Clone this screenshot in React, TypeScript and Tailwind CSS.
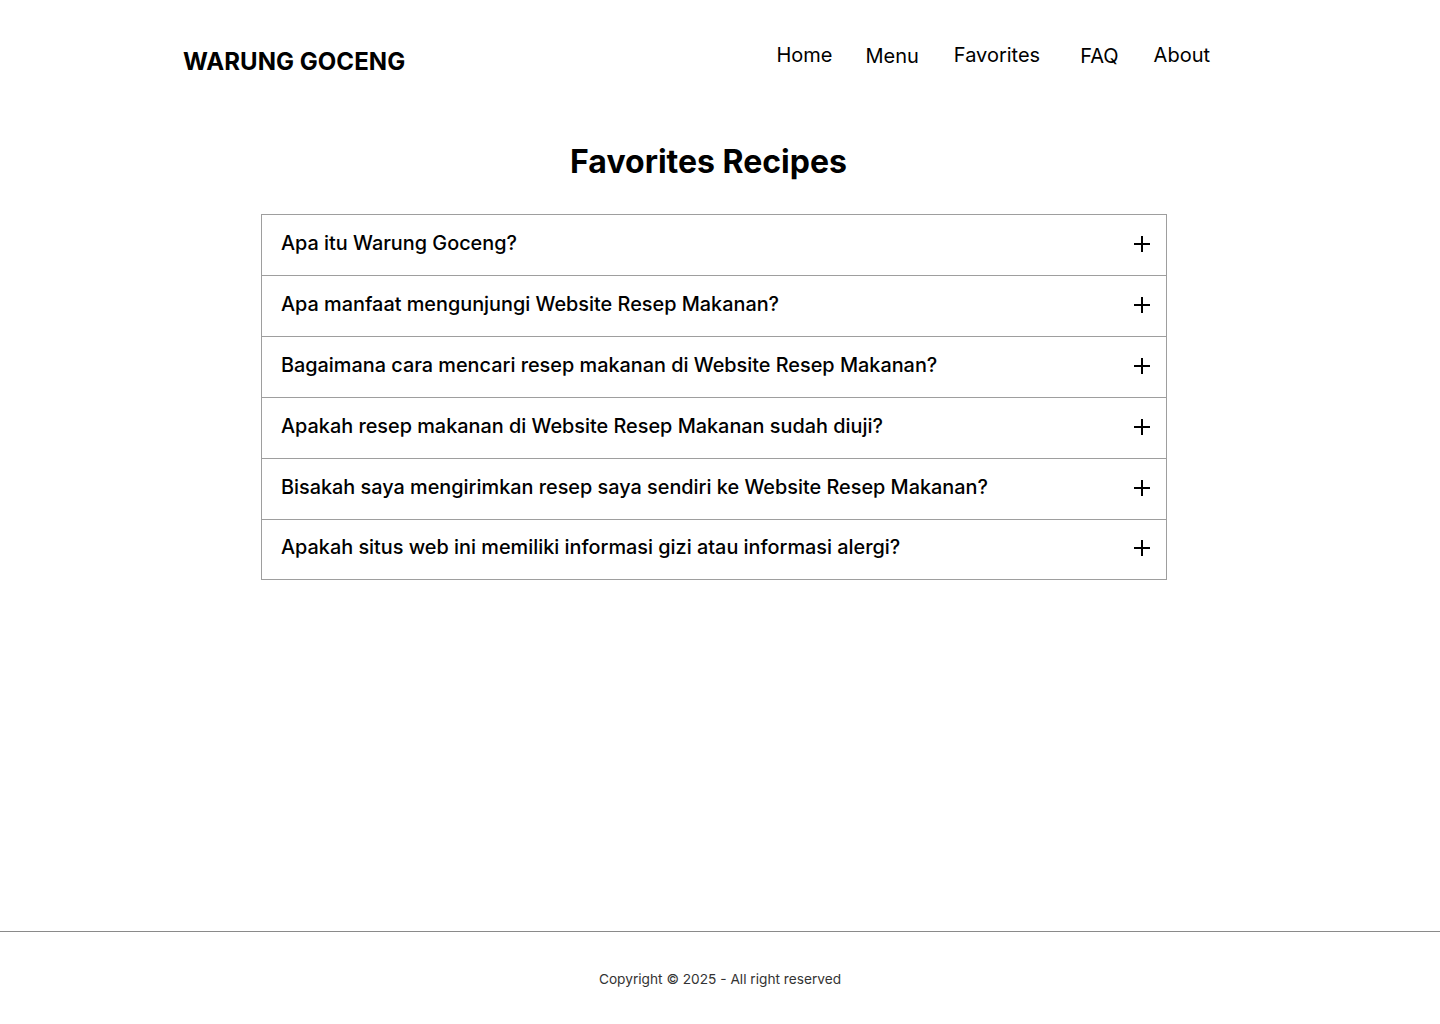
const questions = [
  'Apa itu Warung Goceng?',
  'Apa manfaat mengunjungi Website Resep Makanan?',
  'Bagaimana cara mencari resep makanan di Website Resep Makanan?',
  'Apakah resep makanan di Website Resep Makanan sudah diuji?',
  'Bisakah saya mengirimkan resep saya sendiri ke Website Resep Makanan?',
  'Apakah situs web ini memiliki informasi gizi atau informasi alergi?',
]

function PlusIcon() {
  return (
    <svg width="16" height="16" viewBox="0 0 16 16" fill="none" stroke="black" strokeWidth="2">
      <line x1="8" y1="0" x2="8" y2="16" />
      <line x1="0" y1="8" x2="16" y2="8" />
    </svg>
  )
}

export default function App() {
  return (
    <div className="flex flex-col min-h-screen bg-white text-black font-['Inter',sans-serif]">
      {/* Header */}
      <header className="flex justify-between items-start pl-[183px] pr-[230px] h-[110px]">
        <div className="pt-[46px] text-[24px] leading-[32px] font-bold tracking-[0.05px]">WARUNG GOCENG</div>
        <nav className="flex items-start pt-[41px] text-[20px] leading-[28px]">
          <a className="mr-[33px]">Home</a>
          <a className="mr-[35px] mt-[1px]">Menu</a>
          <a className="mr-[40px]">Favorites</a>
          <a className="mr-[35px] mt-[1px]">FAQ</a>
          <a>About</a>
        </nav>
      </header>

      {/* Main */}
      <main className="flex-grow flex flex-col items-center pr-[12px]">
        <h1 className="mt-[32px] text-[32px] leading-[40px] font-bold pr-[11px]">Favorites Recipes</h1>
        <div className="mt-[32px] w-[906px] border border-[#9e9e9e] divide-y divide-[#9e9e9e]">
          {questions.map((q, i) => (
            <div
              key={i}
              className={`${i === questions.length - 1 ? 'h-[59px]' : 'h-[61px]'} flex items-center justify-between pl-[19px] pr-[16px] pb-[3px]`}
            >
              <span className="text-[19.85px] font-medium">{q}</span>
              <PlusIcon />
            </div>
          ))}
        </div>
      </main>

      {/* Footer */}
      <footer className="h-[93px] border-t border-[#8a8a8a] flex justify-center pt-[37px]">
        <p className="text-[13.7px] leading-[20px] text-[#333]">Copyright © 2025 - All right reserved</p>
      </footer>
    </div>
  )
}
